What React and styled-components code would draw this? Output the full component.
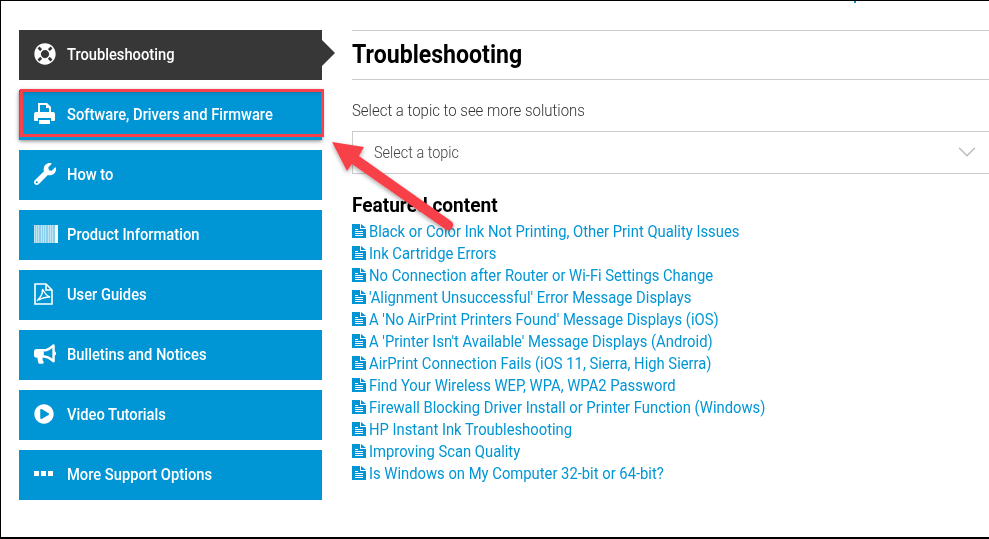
import React from "react";
import styled, { createGlobalStyle } from "styled-components";
import { FaLifeRing, FaWrench, FaBullhorn, FaPlayCircle } from "react-icons/fa";
import { FiChevronDown } from "react-icons/fi";

const GlobalStyle = createGlobalStyle`
  html, body {
    margin: 0;
    padding: 0;
    background: #fff;
  }
  body {
    font-family: "Roboto", "Liberation Sans", sans-serif;
  }
`;

const Page = styled.div`
  position: relative;
  box-sizing: border-box;
  width: 989px;
  height: 539px;
  border: solid #000;
  border-width: 1px 0 2px 1px;
  padding: 29px 0 0 18px;
  display: flex;
  gap: 30px;
  overflow: hidden;
`;

const Sidebar = styled.nav`
  width: 303px;
  flex: none;
  display: flex;
  flex-direction: column;
  gap: 10px;
`;

const NavItem = styled.div`
  position: relative;
  box-sizing: border-box;
  height: 50px;
  padding: 0 0 2px 15px;
  display: flex;
  align-items: center;
  background: ${(props) => (props.$active ? "#373737" : "#0096d6")};
  color: #fff;
  ${(props) =>
    props.$marked &&
    `
    box-shadow: inset 0 5px 4px -2px #0a78aa, 0 1px 4px rgba(0, 0, 0, 0.5);
    &::before {
      content: "";
      position: absolute;
      left: 1px;
      right: -2px;
      top: -1px;
      bottom: 3px;
      border: 3px solid #f8414a;
    }
  `}
  ${(props) =>
    props.$active &&
    `
    &::after {
      content: "";
      position: absolute;
      left: 100%;
      top: 10px;
      border-style: solid;
      border-width: 13px 0 13px 13px;
      border-color: transparent transparent transparent #373737;
    }
  `}
`;

const IconSlot = styled.span`
  width: 33px;
  flex: none;
  display: flex;
  align-items: center;
  font-size: 22px;
`;

const PlayIcon = styled(FaPlayCircle)`
  font-size: 20px;
`;

const Main = styled.main`
  flex: 1;
  min-width: 0;
`;

const Text = styled.span`
  display: inline-block;
  white-space: nowrap;
  font-weight: ${(props) => props.$weight || 400};
  transform: scaleX(${(props) => props.$scale || 0.87});
  transform-origin: left center;
`;

const NavLabel = styled(Text)`
  font-size: 17px;
`;

const Title = styled.h1`
  box-sizing: border-box;
  height: 50px;
  margin: 0;
  padding-bottom: 2px;
  border-top: 1px solid #ccc;
  border-bottom: 1px solid #ccc;
  display: flex;
  align-items: center;
  font-size: 25px;
  font-weight: 700;
  color: #000;
`;

const TopicLabel = styled.div`
  margin-top: 20px;
  height: 20px;
  line-height: 20px;
  font-size: 17px;
  color: #333;
`;

const TopicSelect = styled.div`
  box-sizing: border-box;
  height: 43px;
  margin-top: 11px;
  padding: 0 7px 2px 21px;
  border: solid #ccc;
  border-width: 1px 0 1px 1px;
  display: flex;
  align-items: center;
  justify-content: space-between;
  font-size: 17px;
  color: #444;
`;

const Chevron = styled(FiChevronDown)`
  font-size: 30px;
  color: #bbb;
  stroke-width: 1.2;
`;

const FeaturedTitle = styled.h2`
  margin: 20px 0 0;
  height: 22px;
  line-height: 22px;
  font-size: 21px;
  font-weight: 700;
  color: #000;
`;

const LinkList = styled.ul`
  list-style: none;
  margin: 4px 0 0;
  padding: 0;
`;

const LinkRow = styled.li`
  height: 22px;
  display: flex;
  align-items: center;
  gap: 3px;
  color: #0096d6;
  font-size: 17px;
`;

const FileGlyph = styled.svg`
  flex: none;
`;

const Arrow = styled.svg`
  position: absolute;
  left: -1px;
  top: -1px;
  pointer-events: none;
`;

const TopMark = styled.span`
  position: absolute;
  left: 853px;
  top: 0;
  width: 2px;
  height: 2px;
  background: #0096d6;
`;

// the file glyph in front of each link
const FileIcon = () => (
  <FileGlyph width="14" height="14" viewBox="0 0 14 14" fill="#0096d6">
    <path
      fillRule="evenodd"
      d="M0 0H8V5H14V14H0ZM3 5V6H6V5ZM3 7V8H11V7ZM3 9V10H11V9ZM3 11V12H11V11Z"
    />
    <path d="M9 0L14 4H9Z" />
  </FileGlyph>
);

const PrinterIcon = () => (
  <svg width="21" height="22" viewBox="0 0 21 22" fill="#fff">
    <path fillRule="evenodd" d="M4 9V0H13L17 4V9H15V5H12V2H6V9Z" />
    <path
      fillRule="evenodd"
      d="M2 9H19Q21 9 21 11V17Q21 18 20 18H17V15H4V18H1Q0 18 0 17V11Q0 9 2 9Z"
    />
    <rect x="5" y="17" width="11" height="4" />
  </svg>
);

const BarcodeIcon = () => (
  <svg width="24" height="18" viewBox="0 0 24 18" fill="#fff">
    <rect width="24" height="18" opacity="0.55" />
    {[0, 2, 4, 7, 9, 11, 14, 16, 18].map((x) => (
      <rect key={x} x={x} width="1" height="18" opacity="0.45" />
    ))}
    <rect x="21" width="3" height="18" opacity="0.9" />
  </svg>
);

const PdfIcon = () => (
  <svg width="19" height="22" viewBox="0 0 19 22" fill="none" stroke="#fff">
    <path strokeWidth="1.6" d="M1 1H12L18 7V21H1Z" />
    <path strokeWidth="1.6" d="M12 1V7H18" />
    <path strokeWidth="1.4" d="M3 18C6 15 9 10 8.5 6C11 11 13 13 16 14C12 14 8 15 5 17" />
  </svg>
);

const DotsIcon = () => (
  <svg width="19" height="6" viewBox="0 0 19 6" fill="#fff">
    <rect width="5" height="5" />
    <rect x="7" width="5" height="5" />
    <rect x="14" width="5" height="5" />
  </svg>
);

const navItems = [
  { label: "Troubleshooting", icon: <FaLifeRing />, active: true },
  { label: "Software, Drivers and Firmware", icon: <PrinterIcon />, marked: true },
  { label: "How to", icon: <FaWrench /> },
  { label: "Product Information", icon: <BarcodeIcon /> },
  { label: "User Guides", icon: <PdfIcon /> },
  { label: "Bulletins and Notices", icon: <FaBullhorn /> },
  { label: "Video Tutorials", icon: <PlayIcon /> },
  { label: "More Support Options", icon: <DotsIcon /> },
];

const links = [
  "Black or Color Ink Not Printing, Other Print Quality Issues",
  "Ink Cartridge Errors",
  "No Connection after Router or Wi-Fi Settings Change",
  "'Alignment Unsuccessful' Error Message Displays",
  "A 'No AirPrint Printers Found' Message Displays (iOS)",
  "A 'Printer Isn't Available' Message Displays (Android)",
  "AirPrint Connection Fails (iOS 11, Sierra, High Sierra)",
  "Find Your Wireless WEP, WPA, WPA2 Password",
  "Firewall Blocking Driver Install or Printer Function (Windows)",
  "HP Instant Ink Troubleshooting",
  "Improving Scan Quality",
  "Is Windows on My Computer 32-bit or 64-bit?",
];

export default function App() {
  return (
    <Page>
      <GlobalStyle />
      <TopMark />
      <Sidebar>
        {navItems.map((item) => (
          <NavItem key={item.label} $active={item.active} $marked={item.marked}>
            <IconSlot>{item.icon}</IconSlot>
            <NavLabel $weight={500} $scale={0.865}>
              {item.label}
            </NavLabel>
          </NavItem>
        ))}
      </Sidebar>
      <Main>
        <Title>
          <Text $weight={700} $scale={0.924}>
            Troubleshooting
          </Text>
        </Title>
        <TopicLabel>
          <Text $weight={300} $scale={0.88}>
            Select a topic to see more solutions
          </Text>
        </TopicLabel>
        <TopicSelect>
          <Text $weight={300} $scale={0.85}>
            Select a topic
          </Text>
          <Chevron />
        </TopicSelect>
        <FeaturedTitle>
          <Text $weight={700} $scale={0.907}>
            Featured content
          </Text>
        </FeaturedTitle>
        <LinkList>
          {links.map((text) => (
            <LinkRow key={text}>
              <FileIcon />
              <Text>{text}</Text>
            </LinkRow>
          ))}
        </LinkList>
      </Main>
      <Arrow width="989" height="539" viewBox="0 0 989 539">
        <defs>
          <filter id="arrowShadow" x="-20%" y="-20%" width="140%" height="140%">
            <feDropShadow dx="0" dy="2" stdDeviation="2" floodColor="#000" floodOpacity="0.35" />
          </filter>
        </defs>
        <path
          d="M332 142 L364 147 L359 156 L451 221 Q455 224 452 228 Q449 232 445 229 L352 164 L347 171 Z"
          fill="#f8414a"
          filter="url(#arrowShadow)"
        />
      </Arrow>
    </Page>
  );
}
